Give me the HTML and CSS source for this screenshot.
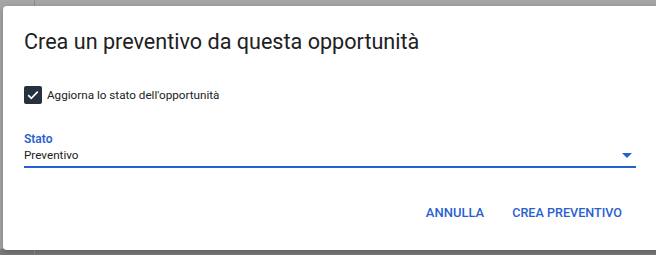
FILE: index.html
```html
<!DOCTYPE html>
<html lang="it">
<head>
<meta charset="utf-8">
<link rel="stylesheet" href="styles.css">
</head>
<body>
<div class="backdrop">
  <div class="bg-line bg-line-v"></div>
  <div class="dialog">
    <h1 class="title">Crea un preventivo da questa opportunità</h1>
    <label class="check-row">
      <span class="checkbox">
        <svg viewBox="0 0 18 18" width="18" height="18"><path d="M4.2 9.2l3.1 3.1 6.5-6.6" fill="none" stroke="#fff" stroke-width="1.7"/></svg>
      </span>
      <span class="check-label">Aggiorna lo stato dell'opportunità</span>
    </label>
    <div class="field">
      <div class="field-label">Stato</div>
      <div class="field-value">
        <span>Preventivo</span>
        <span class="arrow"></span>
      </div>
    </div>
    <div class="actions">
      <button class="btn">ANNULLA</button>
      <button class="btn btn-primary">CREA PREVENTIVO</button>
    </div>
  </div>
</div>
</body>
</html>
```
FILE: styles.css
```css
html, body {
  margin: 0;
  padding: 0;
  width: 656px;
  height: 255px;
  overflow: hidden;
  background: #a3a3a3;
  font-family: Roboto, "Liberation Sans", sans-serif;
}
.backdrop {
  position: relative;
  width: 656px;
  height: 255px;
  padding: 6px 0 0 3px;
  box-sizing: border-box;
  background: linear-gradient(to bottom, #a6a6a6 0, #a6a6a6 248px, #7b7b7b 250px);
}
.bg-line {
  position: absolute;
  background: #8f8f8f;
}
.bg-line-v {
  left: 34px;
  top: 0;
  width: 1px;
  height: 255px;
}
.dialog {
  position: relative;
  width: 680px;
  height: 244px;
  background: #fff;
  border-radius: 4px 0 0 4px;
  box-sizing: border-box;
  padding: 22px 0 0 21px;
  box-shadow: 0 2px 6px rgba(0,0,0,0.25);
}
.title {
  margin: 0;
  font-size: 21.6px;
  line-height: 28px;
  font-weight: 400;
  color: #212121;
}
.check-row {
  display: flex;
  align-items: center;
  gap: 5px;
  margin-top: 30px;
  height: 18px;
}
.checkbox {
  width: 18px;
  height: 18px;
  background: #263140;
  border-radius: 2px;
  display: flex;
}
.check-label {
  font-size: 11.7px;
  color: #212121;
}
.field {
  margin-top: 28px;
  width: 612px;
  border-bottom: 2px solid #2b5fd0;
}
.field-label {
  font-size: 12px;
  line-height: 14px;
  font-weight: 600;
  color: #2b5fd0;
}
.field-value {
  display: flex;
  justify-content: space-between;
  align-items: center;
  font-size: 11.7px;
  line-height: 18px;
  color: #212121;
  padding-bottom: 2px;
}
.arrow {
  width: 0;
  height: 0;
  border-left: 5px solid transparent;
  border-right: 5px solid transparent;
  border-top: 5px solid #2b5fd0;
  margin-right: 4px;
}
.actions {
  display: flex;
  gap: 8px;
  margin-top: 29px;
  width: 612px;
  justify-content: flex-end;
}
.btn {
  background: none;
  border: 0;
  font-family: Roboto, "Liberation Sans", sans-serif;
  font-size: 13px;
  font-weight: 500;
  color: #2b5fd0;
  padding: 6px 10px;
  line-height: 20px;
}
.btn-primary {
  font-size: 12.6px;
  padding-right: 14px;
}
```
